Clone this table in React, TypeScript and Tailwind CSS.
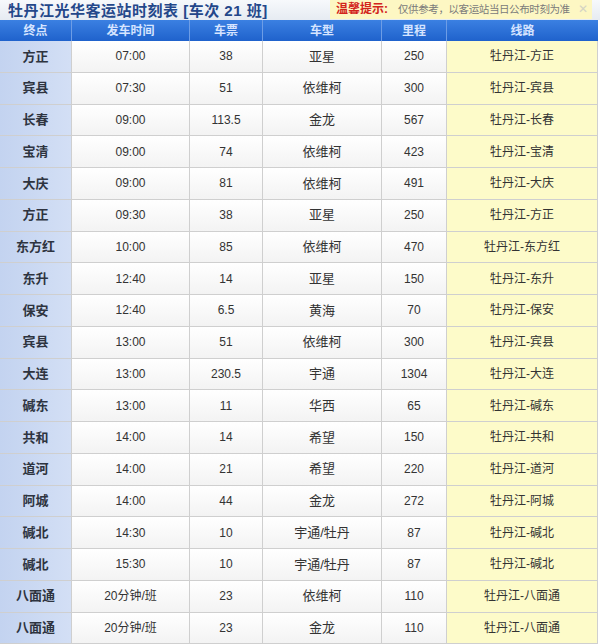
const rows: string[][] = [
  ["方正", "07:00", "38", "亚星", "250", "牡丹江-方正"],
  ["宾县", "07:30", "51", "依维柯", "300", "牡丹江-宾县"],
  ["长春", "09:00", "113.5", "金龙", "567", "牡丹江-长春"],
  ["宝清", "09:00", "74", "依维柯", "423", "牡丹江-宝清"],
  ["大庆", "09:00", "81", "依维柯", "491", "牡丹江-大庆"],
  ["方正", "09:30", "38", "亚星", "250", "牡丹江-方正"],
  ["东方红", "10:00", "85", "依维柯", "470", "牡丹江-东方红"],
  ["东升", "12:40", "14", "亚星", "150", "牡丹江-东升"],
  ["保安", "12:40", "6.5", "黄海", "70", "牡丹江-保安"],
  ["宾县", "13:00", "51", "依维柯", "300", "牡丹江-宾县"],
  ["大连", "13:00", "230.5", "宇通", "1304", "牡丹江-大连"],
  ["碱东", "13:00", "11", "华西", "65", "牡丹江-碱东"],
  ["共和", "14:00", "14", "希望", "150", "牡丹江-共和"],
  ["道河", "14:00", "21", "希望", "220", "牡丹江-道河"],
  ["阿城", "14:00", "44", "金龙", "272", "牡丹江-阿城"],
  ["碱北", "14:30", "10", "宇通/牡丹", "87", "牡丹江-碱北"],
  ["碱北", "15:30", "10", "宇通/牡丹", "87", "牡丹江-碱北"],
  ["八面通", "20分钟/班", "23", "依维柯", "110", "牡丹江-八面通"],
  ["八面通", "20分钟/班", "23", "金龙", "110", "牡丹江-八面通"],
];

const heads = ["终点", "发车时间", "车票", "车型", "里程", "线路"];

const font = { fontFamily: '"Liberation Sans", "Noto Sans CJK SC", sans-serif' };

export default function App() {
  return (
    <div className="w-[600px] h-[644px] overflow-hidden bg-white text-[#333]" style={font}>
      <div className="h-[20px] flex items-center justify-between bg-gradient-to-b from-[#f7f9fc] to-[#e6ebf2]">
        <div className="pl-[8px] text-[15px] font-bold text-[#24478a] leading-none tracking-[0.5px]">
          牡丹江光华客运站时刻表 [车次 21 班]
        </div>
        <div className="w-[262px] h-[19px] mr-[8px] mt-[-2px] flex items-center bg-[#fdf7c3] pl-[6px] leading-none">
          <span className="font-bold text-[12px] text-[#d2231b] whitespace-nowrap">温馨提示:</span>
          <span className="ml-[10px] min-w-0 text-[10.5px] tracking-[-0.4px] text-[#7a7a7a] whitespace-nowrap flex-1">
            仅供参考，以客运站当日公布时刻为准
          </span>
          <span className="ml-[2px] mr-[4px] text-[#d4d4c4] text-[12px]">✕</span>
        </div>
      </div>
      <div className="grid grid-cols-[72px_118px_73px_119px_65px_151px] w-[598px]">
        {heads.map((h, i) => (
          <div
            key={h}
            className={
              "h-[21px] flex items-center justify-center text-[12px] font-bold text-[#d6e4ff] bg-gradient-to-b from-[#3b80e2] to-[#1f62cc] " +
              (i < 5 ? "border-r border-[#6d9de6]" : "")
            }
          >
            {h}
          </div>
        ))}
        {rows.map((r, ri) =>
          r.map((c, ci) => {
            let cls = "h-[31.75px] flex items-center justify-center border-b border-r border-[#cfcfcf] ";
            if (ci === 0) cls += "bg-gradient-to-r from-[#c3d3f0] to-[#d3dff5] font-bold text-[13px] text-[#2e3440]";
            else if (ci === 5) cls += "bg-[#fdfbc9] text-[12px] text-[#333]";
            else cls += "bg-gradient-to-b from-white to-[#f3f3f3] text-[12px] text-[#333]";
            if (ci === 3) cls += " text-[13px]";
            return (
              <div key={ri + "-" + ci} className={cls}>
                {c}
              </div>
            );
          })
        )}
      </div>
    </div>
  );
}
